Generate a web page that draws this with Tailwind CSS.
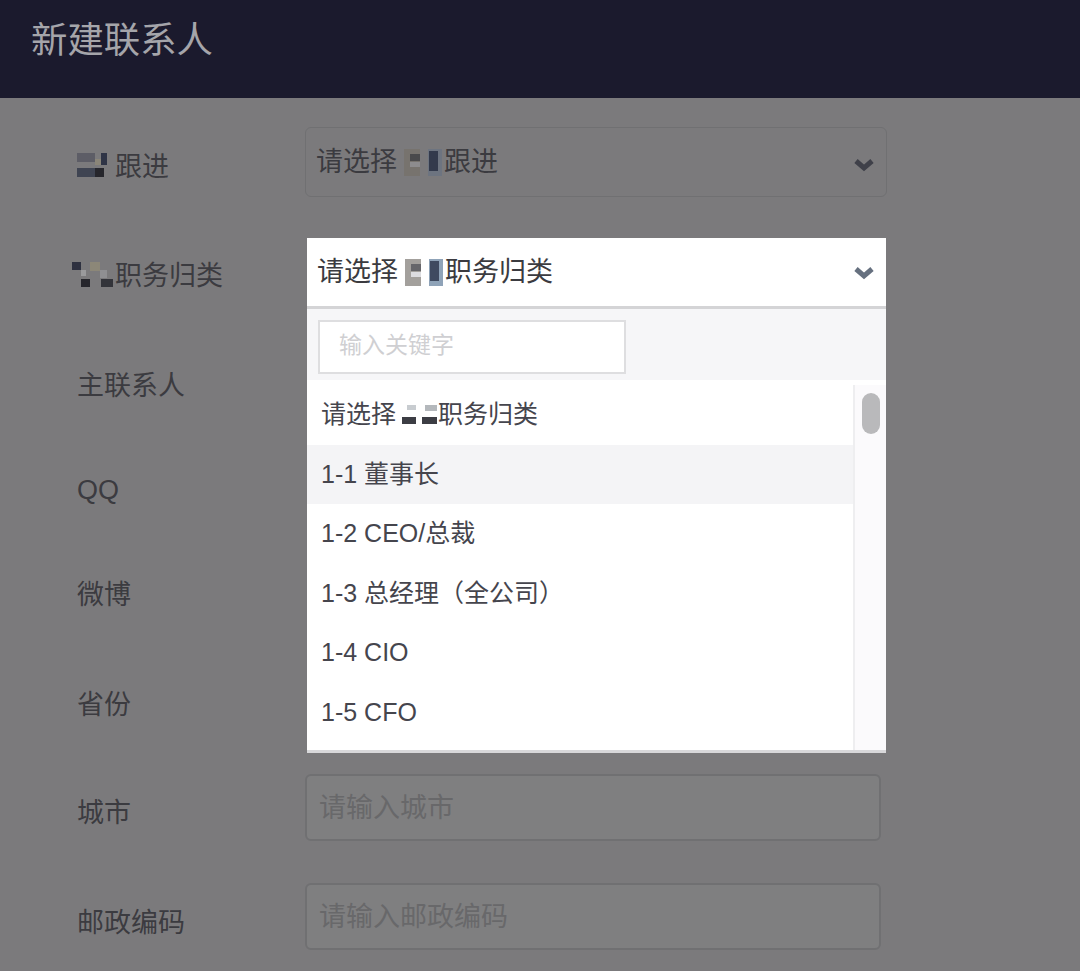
<!DOCTYPE html>
<html lang="zh">
<head>
    <meta charset="UTF-8">
    <title>新建联系人</title>
    <script src="https://cdn.jsdelivr.net/npm/@tailwindcss/browser@4"></script>
</head>
<body class="h-[971px] overflow-hidden bg-[#7b7a7c] font-['Liberation_Sans','Noto_Sans_CJK_SC',sans-serif] text-[27px] text-[#3b3b40]">
    <header class="flex h-[98px] items-start bg-[#1b1a2d] pl-[31px] pt-[14px] text-[36.4px] leading-[54px] text-[#a5a5aa]">新建联系人</header>

    <form class="flex flex-col pl-[77px]">
        <!-- 跟进 -->
        <div class="mt-[29px] flex h-[70px]">
            <label class="flex w-[228px] items-center pt-[11px]">
                <svg class="mr-[8px] -mt-[6px]" width="30" height="24" viewBox="0 0 10 8"><rect y="0" width="6" height="3" fill="#5d5d66"/><rect x="6" y="2" width="2" height="2" fill="#8a8578"/><rect x="8" width="2" height="4" fill="#2f3446"/><rect y="5" width="6" height="3" fill="#3f4452"/><rect x="6" y="5" width="3" height="3" fill="#26262c"/></svg>跟进
            </label>
            <div class="flex h-[70px] w-[582px] items-center justify-between rounded-md border border-[#707072] pl-[10px] pr-[12px] pt-[1px]">
                <span class="flex items-center">请选择<svg class="ml-[7px] mr-[2px]" width="38" height="27" viewBox="0 0 38 27"><rect width="16" height="27" fill="#77736e"/><rect x="6" y="5" width="10" height="7" fill="#4a4a4c"/><rect x="6" y="13" width="10" height="5" fill="#8d8c8e"/><rect x="24" width="14" height="27" fill="#6d7480"/><rect x="25" y="2" width="9" height="20" fill="#333a4c"/></svg>跟进</span>
                <svg class="mt-[5px]" width="20" height="14" viewBox="0 0 20 14" fill="none" stroke="#3f4049" stroke-width="5"><path d="M2 3l8 7 8-7"/></svg>
            </div>
        </div>

        <!-- 职务归类，下拉已展开 -->
        <div class="relative mt-[41px] flex h-[70px]">
            <label class="flex w-[230px] items-center pt-[7px]">
                <svg class="-ml-[5px] -mt-[2px]" width="43" height="28" viewBox="0 0 43 28"><rect width="9" height="8" fill="#2e3140"/><rect x="9" y="8" width="5" height="6" fill="#9a9a9c"/><rect x="18" width="10" height="9" fill="#8c8778"/><rect x="9" y="17" width="9" height="8" fill="#26262c"/><rect x="28" y="8" width="7" height="8" fill="#8f8f92"/><rect x="29" y="17" width="12" height="8" fill="#33343a"/></svg>职务归类
            </label>
            <div class="absolute left-[230px] top-0 z-10 flex w-[579px] flex-col bg-white">
                <div class="flex h-[71px] items-center justify-between border-b-[3px] border-[#d4d4d6] pl-[10px] pr-[12px]">
                    <span class="flex items-center">请选择<svg class="ml-[7px] mr-[2px]" width="38" height="27" viewBox="0 0 38 27"><rect width="16" height="27" fill="#a3a09c"/><rect x="6" y="5" width="10" height="7" fill="#66666a"/><rect x="6" y="13" width="10" height="5" fill="#dddde0"/><rect x="24" width="14" height="27" fill="#8fa3b8"/><rect x="25" y="2" width="9" height="20" fill="#3f4a60"/></svg>职务归类</span>
                    <svg class="mt-[2px]" width="20" height="14" viewBox="0 0 20 14" fill="none" stroke="#66707f" stroke-width="5"><path d="M2 3l8 7 8-7"/></svg>
                </div>
                <div class="h-[71px] bg-[#f6f6f8] pl-[11px] pt-[11px]">
                    <input class="h-[54px] w-[308px] border-2 border-[#dedee0] bg-white pl-[19px] pb-[4px] text-[23px] placeholder:text-[#cfcfd2]" placeholder="输入关键字">
                </div>
                <div class="flex h-[370px]">
                    <ul class="w-[546px] overflow-hidden pt-[5px] text-[25px] text-[#45454d]">
                        <li class="flex h-[59.5px] items-center pl-[14px]">请选择<svg class="ml-[5px]" width="37" height="24" viewBox="0 0 37 24"><rect x="1" y="14" width="14" height="7" fill="#3c3d44"/><rect x="6" y="2" width="9" height="5" fill="#c8ccd0"/><rect x="21" y="14" width="15" height="7" fill="#3c3d44"/><rect x="24" y="2" width="12" height="6" fill="#b4b8bc"/></svg>职务归类</li>
                        <li class="flex h-[59.5px] items-center bg-[#f4f4f6] pl-[14px]">1-1 董事长</li>
                        <li class="flex h-[59.5px] items-center pl-[14px]">1-2 CEO/总裁</li>
                        <li class="flex h-[59.5px] items-center pl-[14px]">1-3 总经理（全公司）</li>
                        <li class="flex h-[59.5px] items-center pl-[14px]">1-4 CIO</li>
                        <li class="flex h-[59.5px] items-center pl-[14px]">1-5 CFO</li>
                    </ul>
                    <div class="mt-[5px] flex-1 border-l-2 border-[#eeeef0] bg-[#fbfafc] pl-[7px] pt-[8px]">
                        <div class="h-[41px] w-[18px] rounded-[9px] bg-[#b9b9bb]"></div>
                    </div>
                </div>
                <div class="h-[3px] bg-[#d8d8da]"></div>
            </div>
        </div>

        <div class="mt-[43px] flex h-[70px] items-center">主联系人</div>
        <div class="mt-[34px] flex h-[70px] items-center">QQ</div>
        <div class="mt-[35px] flex h-[70px] items-center">微博</div>
        <div class="mt-[40px] flex h-[70px] items-center">省份</div>

        <!-- 城市 -->
        <div class="mt-[34px] flex h-[67px] items-center">
            <label class="w-[228px] pt-[12px]">城市</label>
            <input class="h-[67px] w-[576px] rounded-md border-2 border-[#707072] bg-[#7f7f80] pl-[12px] pt-[2px] placeholder:text-[#68686a]" placeholder="请输入城市">
        </div>
        <!-- 邮政编码 -->
        <div class="mt-[42px] flex h-[67px] items-center">
            <label class="w-[228px] pt-[14px]">邮政编码</label>
            <input class="h-[67px] w-[576px] rounded-md border-2 border-[#707072] bg-[#7f7f80] pl-[12px] pt-[2px] placeholder:text-[#68686a]" placeholder="请输入邮政编码">
        </div>
    </form>
</body>
</html>
